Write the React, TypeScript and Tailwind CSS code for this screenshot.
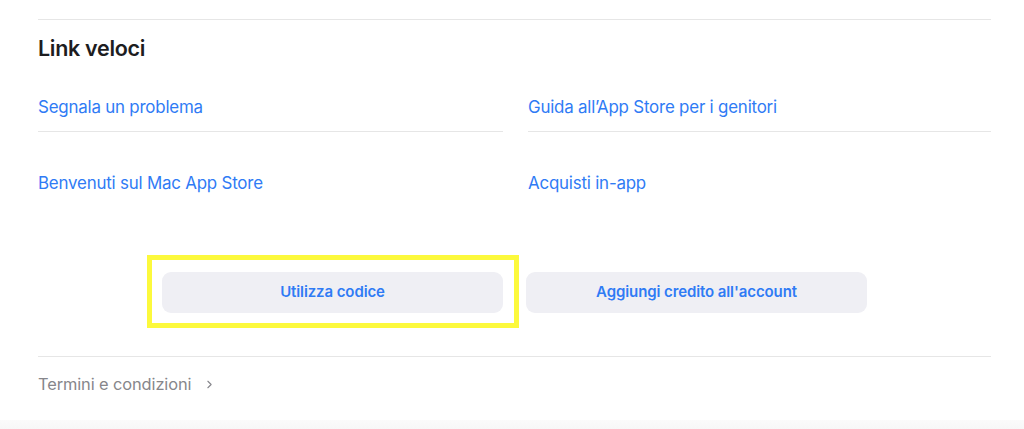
import { ChevronRight } from "lucide-react";

const links = [
  "Segnala un problema",
  "Guida all’App Store per i genitori",
  "Benvenuti sul Mac App Store",
  "Acquisti in-app",
];

export default function App() {
  return (
    <div
      className="w-[1024px] h-[429px] bg-white overflow-hidden flex flex-col"
      style={{ fontFamily: "Inter, 'Noto Sans', sans-serif" }}
    >
      <div className="mx-[38px] w-[953px] h-[420px] shrink-0">
        <div className="mt-[19px] border-t border-[#e6e6e6]" />

        {/* Quick links */}
        <h2 className="mt-[15px] text-[21.5px] leading-[26px] font-semibold text-[#1d1d1f] tracking-[-0.3px]">
          Link veloci
        </h2>
        <div className="grid grid-cols-[465px_1fr] gap-x-[25px]">
          {links.map((l, i) => (
            <div
              key={l}
              className={
                i < 2
                  ? "h-[71px] pt-[36px] border-b border-[#e6e6e6]"
                  : "h-[61px] pt-[41px]"
              }
            >
              <a className="block text-[16.9px] leading-[20px] text-[#2f7bf5] tracking-[-0.2px]">{l}</a>
            </div>
          ))}
        </div>

        {/* Buttons */}
        <div className="mt-[79px] flex justify-center gap-[23px]">
          <div className="relative">
            <button className="w-[341px] h-[41px] rounded-[9px] bg-[#efeff4] text-[15px] font-semibold text-[#2f7bf5] tracking-[-0.1px]">
              Utilizza codice
            </button>
            <div className="absolute left-[-15px] top-[-17px] w-[372px] h-[73px] border-[5px] border-[#fcf93c] pointer-events-none" />
          </div>
          <button className="w-[341px] h-[41px] rounded-[9px] bg-[#efeff4] text-[15px] font-semibold text-[#2f7bf5] tracking-[-0.1px]">
            Aggiungi credito all'account
          </button>
        </div>

        <div className="mt-[43px] border-t border-[#e6e6e6]" />
        <div className="mt-[17px] flex items-center gap-[12px] text-[16.4px] leading-[20px] text-[#86868b] tracking-[-0.1px]">
          <span>Termini e condizioni</span>
          <ChevronRight size={13} strokeWidth={2} />
        </div>
      </div>
      <div className="flex-1 bg-gradient-to-b from-[#fbfbfb] to-[#f7f7f7]" />
    </div>
  );
}
